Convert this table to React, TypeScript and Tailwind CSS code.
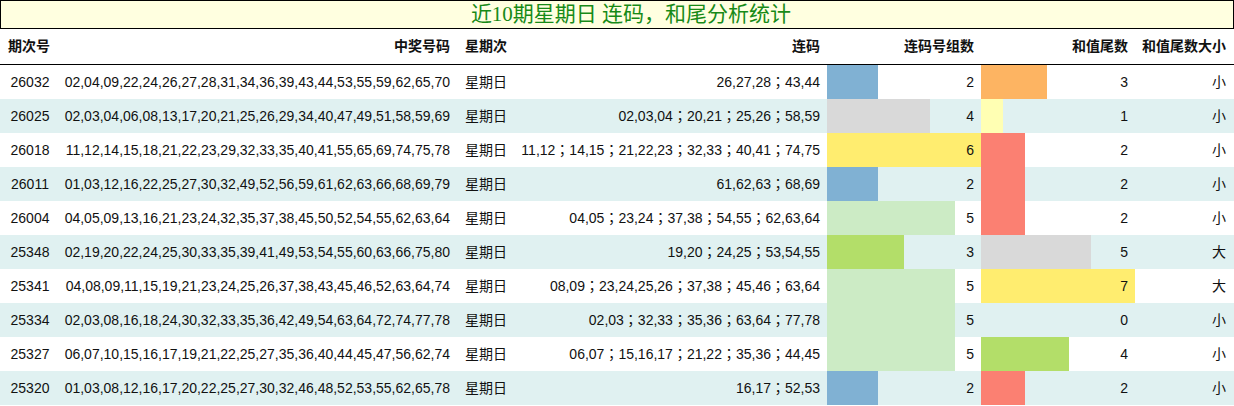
import React from 'react'

const rows = [
    { no: '26032', nums: '02,04,09,22,24,26,27,28,31,34,36,39,43,44,53,55,59,62,65,70', lian: '26,27,28；43,44', groups: 2, tail: 3, size: '小' },
    { no: '26025', nums: '02,03,04,06,08,13,17,20,21,25,26,29,34,40,47,49,51,58,59,69', lian: '02,03,04；20,21；25,26；58,59', groups: 4, tail: 1, size: '小' },
    { no: '26018', nums: '11,12,14,15,18,21,22,23,29,32,33,35,40,41,55,65,69,74,75,78', lian: '11,12；14,15；21,22,23；32,33；40,41；74,75', groups: 6, tail: 2, size: '小' },
    { no: '26011', nums: '01,03,12,16,22,25,27,30,32,49,52,56,59,61,62,63,66,68,69,79', lian: '61,62,63；68,69', groups: 2, tail: 2, size: '小' },
    { no: '26004', nums: '04,05,09,13,16,21,23,24,32,35,37,38,45,50,52,54,55,62,63,64', lian: '04,05；23,24；37,38；54,55；62,63,64', groups: 5, tail: 2, size: '小' },
    { no: '25348', nums: '02,19,20,22,24,25,30,33,35,39,41,49,53,54,55,60,63,66,75,80', lian: '19,20；24,25；53,54,55', groups: 3, tail: 5, size: '大' },
    { no: '25341', nums: '04,08,09,11,15,19,21,23,24,25,26,37,38,43,45,46,52,63,64,74', lian: '08,09；23,24,25,26；37,38；45,46；63,64', groups: 5, tail: 7, size: '大' },
    { no: '25334', nums: '02,03,08,16,18,24,30,32,33,35,36,42,49,54,63,64,72,74,77,78', lian: '02,03；32,33；35,36；63,64；77,78', groups: 5, tail: 0, size: '小' },
    { no: '25327', nums: '06,07,10,15,16,17,19,21,22,25,27,35,36,40,44,45,47,56,62,74', lian: '06,07；15,16,17；21,22；35,36；44,45', groups: 5, tail: 4, size: '小' },
    { no: '25320', nums: '01,03,08,12,16,17,20,22,25,27,30,32,46,48,52,53,55,62,65,78', lian: '16,17；52,53', groups: 2, tail: 2, size: '小' },
]

const groupColors: Record<number, string> = {
    2: '#80b1d3',
    3: '#b3de69',
    4: '#d9d9d9',
    5: '#ccebc5',
    6: '#ffed6f',
}

const tailColors: Record<number, string> = {
    1: '#ffffb3',
    2: '#fb8072',
    3: '#fdb462',
    4: '#b3de69',
    5: '#d9d9d9',
    7: '#ffed6f',
}

// data bar drawn as a hard-stop gradient behind the number
function barStyle(color: string | undefined, width: number): React.CSSProperties {
    if (!color || width <= 0) return {}
    return {
        backgroundImage: `linear-gradient(to right, ${color} 0, ${color} ${width}px, transparent ${width}px)`,
    }
}

const gridCols = 'grid grid-cols-[58px_400px_55px_314px_154px_154px_99px]'

export default function App() {
    return (
        <div className="w-[1234px] h-[406px] bg-white text-[14px] text-[#111] font-['Liberation_Sans','Noto_Sans_CJK_SC',sans-serif]">
            <div className="h-[29px] border border-black bg-[#ffffe0] flex items-center justify-center pl-[28px]">
                <span className="text-[21px] leading-none text-[#178a17] font-['Liberation_Serif','Noto_Sans_CJK_SC',serif]">
                    近10期星期日 连码，和尾分析统计
                </span>
            </div>

            <div className={cn(gridCols, 'h-[36px] border-b border-black font-bold items-center')}>
                <div className="pl-[8px]">期次号</div>
                <div className="text-right pr-[8px]">中奖号码</div>
                <div className="pl-[7px]">星期次</div>
                <div className="text-right pr-[7px]">连码</div>
                <div className="text-right pr-[7px]">连码号组数</div>
                <div className="text-right pr-[7px]">和值尾数</div>
                <div className="text-right pr-[8px]">和值尾数大小</div>
            </div>

            {rows.map((r, i) => (
                <div
                    key={r.no}
                    className={cn(gridCols, 'h-[34px] items-stretch', i % 2 === 1 ? 'bg-[#e0f1f1]' : 'bg-white')}
                >
                    <div className="flex items-center justify-center pl-[2px]">{r.no}</div>
                    <div className="flex items-center justify-end pr-[8px]">{r.nums}</div>
                    <div className="flex items-center pl-[7px]">星期日</div>
                    <div className="flex items-center justify-end pr-[7px] font-['Liberation_Sans','Noto_Sans_CJK_TC',sans-serif]">
                        {r.lian}
                    </div>
                    <div
                        className="flex items-center justify-end pr-[7px]"
                        style={barStyle(groupColors[r.groups], Math.round((r.groups / 6) * 154))}
                    >
                        {r.groups}
                    </div>
                    <div
                        className="flex items-center justify-end pr-[7px]"
                        style={barStyle(tailColors[r.tail], r.tail * 22)}
                    >
                        {r.tail}
                    </div>
                    <div className="flex items-center justify-end pr-[8px]">{r.size}</div>
                </div>
            ))}
        </div>
    )
}

function cn(...inputs: any[]) {
    return inputs.filter(Boolean).join(' ')
}
